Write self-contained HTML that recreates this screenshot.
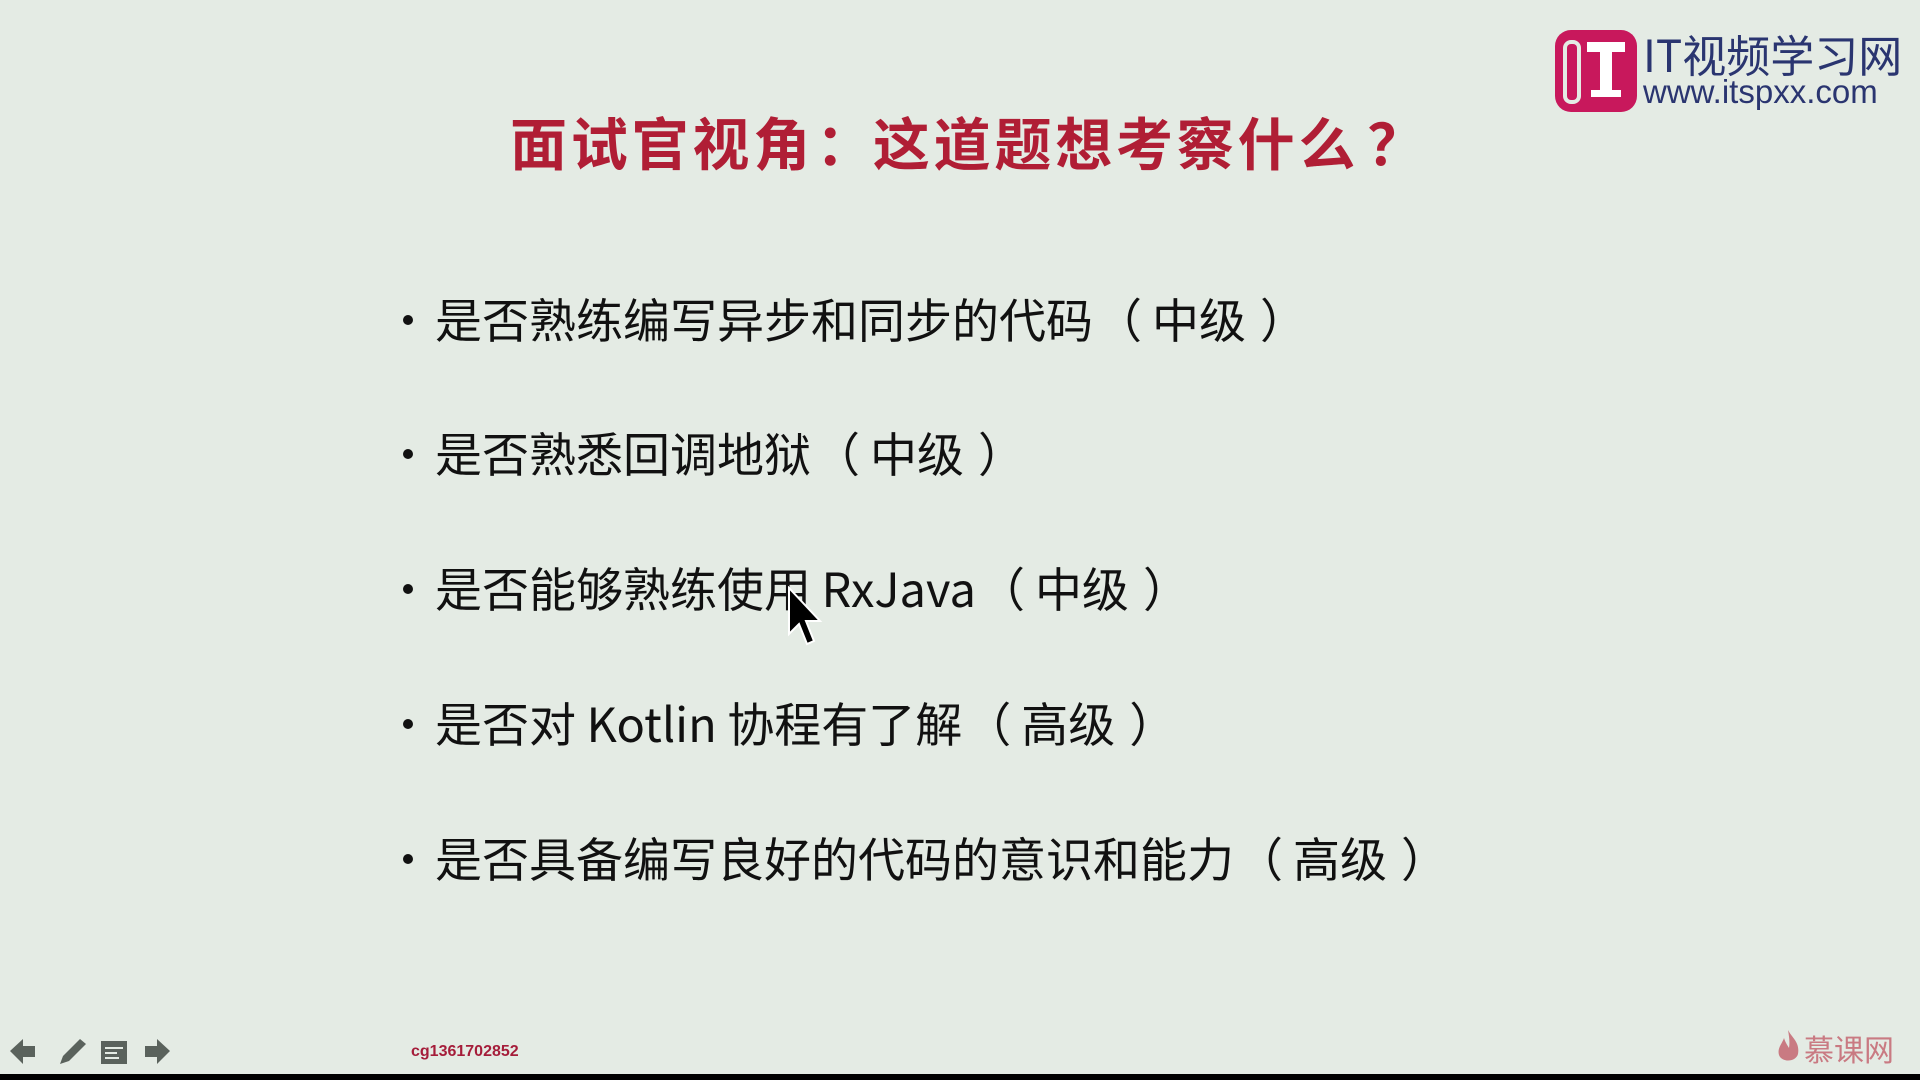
<!DOCTYPE html>
<html><head><meta charset="utf-8"><style>
html,body{margin:0;padding:0}
body{width:1920px;height:1080px;background:#e4ebe4;position:relative;overflow:hidden;font-family:"Liberation Sans","Noto Sans CJK SC",sans-serif}
.title{position:absolute;left:510px;top:100px;font-size:57px;font-weight:bold;color:#b01e35;white-space:nowrap;letter-spacing:3.8px;font-family:"Noto Sans CJK SC",sans-serif}
.li{position:absolute;left:435px;font-size:47px;color:#111;white-space:nowrap;line-height:56px;font-family:"Noto Sans CJK SC",sans-serif}
.li:before{content:"";position:absolute;left:-32px;top:25px;width:10px;height:10px;border-radius:50%;background:#111}
.p{display:inline-block;margin:0 8px 0 14px}
.q{display:inline-block;margin:0 10px 0 2px}
.bar{position:absolute;left:0;top:1074px;width:1920px;height:6px;background:#000}
.id{position:absolute;left:411px;top:1043px;font-size:16px;font-weight:bold;color:#a51d3a}
</style></head><body>
<div class="title">面试官视角<span style="margin:0 -4px 0 2px">：</span>这道题想考察什么<span style="margin-left:8px">？</span></div>
<div class="li" style="top:290px">是否熟练编写异步和同步的代码<span class="q">（</span>中级<span class="p">）</span></div>
<div class="li" style="top:424px">是否熟悉回调地狱<span class="q">（</span>中级<span class="p">）</span></div>
<div class="li" style="top:559px">是否能够熟练使用 RxJava<span class="q">（</span>中级<span class="p">）</span></div>
<div class="li" style="top:694px">是否对 Kotlin 协程有了解<span class="q">（</span>高级<span class="p">）</span></div>
<div class="li" style="top:829px">是否具备编写良好的代码的意识和能力<span class="q">（</span>高级<span class="p">）</span></div>
<svg style="position:absolute;left:786px;top:586px" width="40" height="66" viewBox="0 0 40 66"><path d="M3 2 L3 48 L13 38 L21 58 L28 55 L20 35 L34 35 Z" fill="#000" stroke="#fff" stroke-width="2"/></svg>
<svg style="position:absolute;left:1555px;top:30px" width="82" height="82" viewBox="0 0 82 82"><rect x="0" y="0" width="82" height="82" rx="16" fill="#c8185c"/><rect x="8" y="10" width="18" height="64" rx="8" fill="#e4ebe4"/><rect x="12" y="14" width="10" height="56" rx="4" fill="#c8185c"/><rect x="32" y="12" width="38" height="10" fill="#fff"/><rect x="45" y="12" width="12" height="54" fill="#fff"/><rect x="36" y="60" width="30" height="7" fill="#fff"/></svg>
<div style="position:absolute;left:1643px;top:28px;font-size:44px;color:#2a3570;font-family:'Noto Sans CJK SC',sans-serif;white-space:nowrap;line-height:50px">IT视频学习网</div>
<div style="position:absolute;left:1643px;top:74px;font-size:33px;color:#2a3570;white-space:nowrap;line-height:36px">www.itspxx.com</div>
<svg style="position:absolute;left:8px;top:1036px" width="170" height="32" viewBox="0 0 170 32"><path d="M2 15 L15 3 L15 10 L27 10 L27 21 L15 21 L15 28 Z" fill="#5a625c"/><path d="M52 28 L55 20 L72 3 L78 8 L61 25 Z" fill="#5a625c"/><rect x="93" y="5" width="26" height="23" fill="#5a625c"/><rect x="97" y="11" width="18" height="2" fill="#e4ebe4"/><rect x="97" y="16" width="12" height="2" fill="#e4ebe4"/><rect x="97" y="21" width="14" height="2" fill="#e4ebe4"/><path d="M162 15 L149 3 L149 10 L137 10 L137 21 L149 21 L149 28 Z" fill="#5a625c"/></svg>
<div class="id">cg1361702852</div>
<svg style="position:absolute;left:1776px;top:1028px" width="26" height="36" viewBox="0 0 26 36"><path d="M12 2 C16 10 24 14 22 26 C20 34 6 35 3 27 C1 20 6 16 8 10 C10 16 12 18 13 20 C14 14 13 8 12 2 Z" fill="#c97a82"/></svg>
<div style="position:absolute;left:1804px;top:1030px;font-size:30px;color:#c97a82;font-family:'Noto Sans CJK SC',sans-serif;line-height:36px">慕课网</div>
<div class="bar"></div>
</body></html>
